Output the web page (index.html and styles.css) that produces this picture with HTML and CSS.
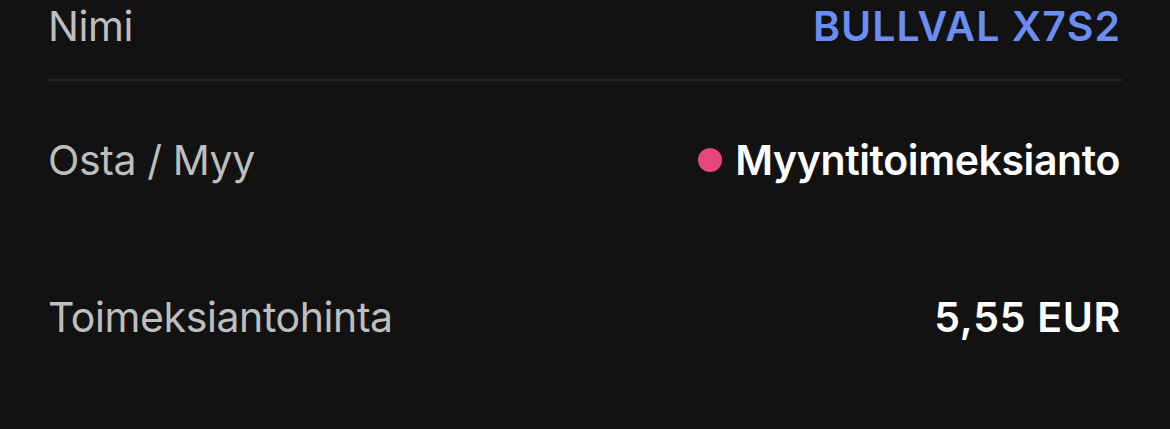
FILE: index.html
```html
<!DOCTYPE html>
<html lang="fi">
<head>
<meta charset="utf-8">
<title>Toimeksianto</title>
<link rel="stylesheet" href="styles.css">
</head>
<body>
<div class="details">
  <div class="row row-first">
    <span class="label">Nimi</span>
    <span class="value value-link">BULLVAL X7S2</span>
  </div>
  <div class="row">
    <span class="label">Osta / Myy</span>
    <span class="value"><span class="dot"></span>Myyntitoimeksianto</span>
  </div>
  <div class="row">
    <span class="label">Toimeksiantohinta</span>
    <span class="value value-price">5,55 EUR</span>
  </div>
</div>
</body>
</html>
```
FILE: styles.css
```css
html, body {
  margin: 0;
  padding: 0;
  background: #121212;
}
body {
  font-family: Inter, "Liberation Sans", sans-serif;
  width: 1170px;
  height: 429px;
  overflow: hidden;
}
.details {
  padding: 0 48px;
}
.row {
  display: flex;
  justify-content: space-between;
  align-items: center;
  font-size: 41px;
  line-height: 52px;
  padding: 53px 0 52px;
}
.row-first {
  padding: 0 0 27px;
  border-bottom: 2px solid #242424;
}
.label {
  color: #bebebe;
  letter-spacing: -0.4px;
}
.value {
  color: #ffffff;
  font-weight: 600;
  display: flex;
  align-items: center;
  letter-spacing: -0.4px;
  margin-right: 2px;
}
.value-link {
  color: #6b8ef4;
  letter-spacing: 1px;
  margin-right: 1px;
}
.value-price {
  letter-spacing: 0.7px;
  margin-right: 1px;
}
.dot {
  width: 24px;
  height: 24px;
  border-radius: 50%;
  background: #e8467f;
  margin-right: 13px;
}
```
